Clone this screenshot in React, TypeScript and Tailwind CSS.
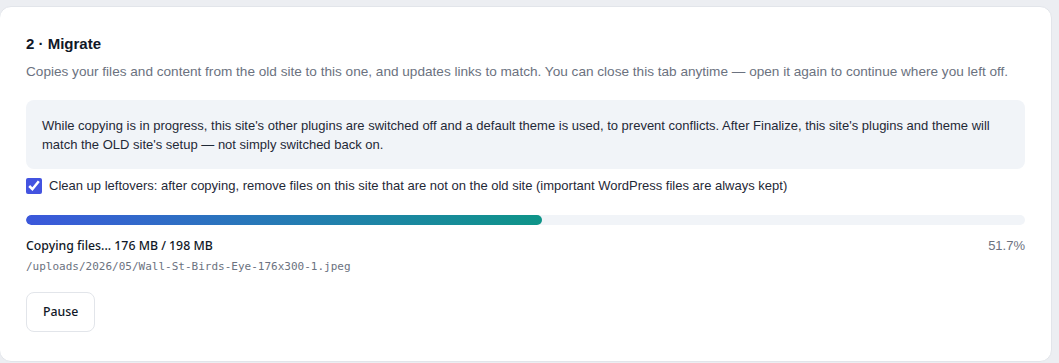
export default function App() {
  const pct = 51.7;
  return (
    <div className="min-h-screen bg-[#eceef2] pt-[6px] pr-[7px] pb-[1px]" style={{ fontFamily: '"Liberation Sans", Arial, sans-serif' }}>
      <div className="h-[356px] rounded-[12px] border border-[#e2e5ea] bg-white px-[26px] pt-[26px] -ml-px">
        <h2 className="text-[15px] font-bold leading-[22px] text-[#111827]">2 · Migrate</h2>
        <p className="mt-[7px] text-[13.6px] leading-[20px] text-[#6b7280] whitespace-nowrap">
          Copies your files and content from the old site to this one, and updates links to match. You can close this tab anytime — open it again to continue where you left off.
        </p>

        <div className="mt-[18px] rounded-[8px] bg-[#f1f4f8] px-4 pt-[16px] pb-[15px] text-[13px] leading-[19px] text-[#1f2937]">
          While copying is in progress, this site's other plugins are switched off and a default theme is used, to prevent conflicts. After Finalize, this site's plugins and theme will match the OLD site's setup — not simply switched back on.
        </div>

        <label className="mt-[8px] flex items-center gap-[7px] text-[13px] leading-[18px] text-[#1f2937]">
          <input type="checkbox" defaultChecked className="m-0 h-4 w-4 accent-[#4353e0]" />
          Clean up leftovers: after copying, remove files on this site that are not on the old site (important WordPress files are always kept)
        </label>

        <div className="mt-[20px] h-[10px] w-full overflow-hidden rounded-full bg-[#f1f4f8]">
          <div className="h-full rounded-full bg-gradient-to-r from-[#3b57db] to-[#0e9488]" style={{ width: `${pct}%` }} />
        </div>

        <div className="mt-[12px] flex items-center justify-between text-[13px] leading-[18px]">
          <span className="text-[12.3px] font-medium text-[#111827]" style={{ fontFamily: '"Noto Sans", sans-serif' }}>
            Copying files... 176 MB / 198 MB
          </span>
          <span className="text-[#6b7280]">{pct}%</span>
        </div>
        <div className="mt-[4px] text-[11px] leading-[16px] text-[#6b7280]" style={{ fontFamily: '"DejaVu Sans Mono", monospace' }}>
          /uploads/2026/05/Wall-St-Birds-Eye-176x300-1.jpeg
        </div>

        <button
          className="mt-[17px] h-[40px] rounded-[8px] border border-[#e2e5ea] bg-white px-4 text-[12.3px] font-medium text-[#111827]"
          style={{ fontFamily: '"Noto Sans", sans-serif' }}
        >
          Pause
        </button>
      </div>
    </div>
  );
}
